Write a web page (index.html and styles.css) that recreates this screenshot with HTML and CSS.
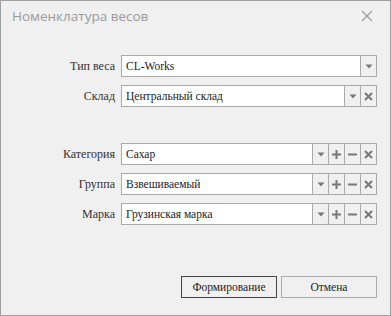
FILE: index.html
```html
<!DOCTYPE html>
<html lang="ru">
<head>
<meta charset="utf-8">
<link rel="stylesheet" href="styles.css">
</head>
<body>
<div class="dialog">
  <div class="header">
    <span class="title">Номенклатура весов</span>
    <svg class="close" width="12" height="12" viewBox="0 0 12 12"><path d="M1 1L11 11M11 1L1 11" stroke="#9a9a9a" stroke-width="1.2" fill="none"/></svg>
  </div>
  <div class="form">
    <label class="lbl">Тип веса</label>
    <div class="field">
      <span class="val">CL-Works</span>
      <span class="btn"><svg width="8" height="5" viewBox="0 0 8 5"><path d="M0.5 0.5H7.5L4 4.5Z" fill="#777"/></svg></span>
    </div>
    <label class="lbl">Склад</label>
    <div class="field">
      <span class="val">Центральный склад</span>
      <span class="btn"><svg width="8" height="5" viewBox="0 0 8 5"><path d="M0.5 0.5H7.5L4 4.5Z" fill="#777"/></svg></span>
      <span class="btn"><svg width="9" height="9" viewBox="0 0 9 9"><path d="M1 1L8 8M8 1L1 8" stroke="#777" stroke-width="2" fill="none"/></svg></span>
    </div>
    <div class="spacer"></div>
    <label class="lbl">Категория</label>
    <div class="field">
      <span class="val">Сахар</span>
      <span class="btn"><svg width="8" height="5" viewBox="0 0 8 5"><path d="M0.5 0.5H7.5L4 4.5Z" fill="#777"/></svg></span>
      <span class="btn"><svg width="9" height="9" viewBox="0 0 9 9"><path d="M4.5 0V9M0 4.5H9" stroke="#777" stroke-width="2" fill="none"/></svg></span>
      <span class="btn"><svg width="9" height="9" viewBox="0 0 9 9"><path d="M0 4.5H9" stroke="#777" stroke-width="2" fill="none"/></svg></span>
      <span class="btn"><svg width="9" height="9" viewBox="0 0 9 9"><path d="M1 1L8 8M8 1L1 8" stroke="#777" stroke-width="2" fill="none"/></svg></span>
    </div>
    <label class="lbl">Группа</label>
    <div class="field">
      <span class="val">Взвешиваемый</span>
      <span class="btn"><svg width="8" height="5" viewBox="0 0 8 5"><path d="M0.5 0.5H7.5L4 4.5Z" fill="#777"/></svg></span>
      <span class="btn"><svg width="9" height="9" viewBox="0 0 9 9"><path d="M4.5 0V9M0 4.5H9" stroke="#777" stroke-width="2" fill="none"/></svg></span>
      <span class="btn"><svg width="9" height="9" viewBox="0 0 9 9"><path d="M0 4.5H9" stroke="#777" stroke-width="2" fill="none"/></svg></span>
      <span class="btn"><svg width="9" height="9" viewBox="0 0 9 9"><path d="M1 1L8 8M8 1L1 8" stroke="#777" stroke-width="2" fill="none"/></svg></span>
    </div>
    <label class="lbl">Марка</label>
    <div class="field">
      <span class="val">Грузинская марка</span>
      <span class="btn"><svg width="8" height="5" viewBox="0 0 8 5"><path d="M0.5 0.5H7.5L4 4.5Z" fill="#777"/></svg></span>
      <span class="btn"><svg width="9" height="9" viewBox="0 0 9 9"><path d="M4.5 0V9M0 4.5H9" stroke="#777" stroke-width="2" fill="none"/></svg></span>
      <span class="btn"><svg width="9" height="9" viewBox="0 0 9 9"><path d="M0 4.5H9" stroke="#777" stroke-width="2" fill="none"/></svg></span>
      <span class="btn"><svg width="9" height="9" viewBox="0 0 9 9"><path d="M1 1L8 8M8 1L1 8" stroke="#777" stroke-width="2" fill="none"/></svg></span>
    </div>
  </div>
  <div class="footer">
    <button class="action primary">Формирование</button>
    <button class="action">Отмена</button>
  </div>
</div>
</body>
</html>
```

FILE: styles.css
```css
html, body {
  margin: 0;
  padding: 0;
  background: #f0f0f0;
}
.dialog {
  box-sizing: border-box;
  width: 391px;
  height: 316px;
  border: 1px solid #a0a0a0;
  background: #f0f0f0;
  display: flex;
  flex-direction: column;
}
.header {
  height: 30px;
  display: flex;
  align-items: center;
  justify-content: space-between;
  padding: 0 13px 0 11px;
}
.title {
  font-family: "Open Sans", sans-serif;
  font-size: 13.5px;
  color: #9a9a9a;
}
.close {
  display: block;
  margin-right: 4px;
}
.form {
  margin-top: 24px;
  padding-right: 13px;
  display: grid;
  grid-template-columns: 114px 1fr;
  column-gap: 6px;
  row-gap: 8px;
}
.spacer {
  grid-column: 1 / 3;
  height: 20px;
}
.lbl {
  text-align: right;
  font-family: "Liberation Serif", "Liberation Sans", sans-serif;
  font-size: 12px;
  color: #333;
  line-height: 22px;
}
.field {
  box-sizing: border-box;
  height: 22px;
  border: 1px solid #a9a9a9;
  display: flex;
  background: #f0f0f0;
}
.val {
  flex: 1;
  background: #fff;
  font-family: "Liberation Serif", "Liberation Sans", sans-serif;
  font-size: 11.5px;
  color: #222;
  line-height: 20px;
  padding-left: 4px;
}
.btn {
  width: 15px;
  border-left: 1px solid #a9a9a9;
  display: flex;
  align-items: center;
  justify-content: center;
}
.btn svg {
  display: block;
}
.footer {
  margin-top: auto;
  padding: 0 13px 17px 0;
  display: flex;
  justify-content: flex-end;
  gap: 4px;
}
.action {
  box-sizing: border-box;
  width: 96px;
  height: 22px;
  background: #f0f0f0;
  border: 1px solid #aaa;
  font-family: "Liberation Serif", "Liberation Sans", sans-serif;
  font-size: 11.5px;
  color: #222;
  padding: 0;
}
.action.primary {
  border-color: #444;
}
```
